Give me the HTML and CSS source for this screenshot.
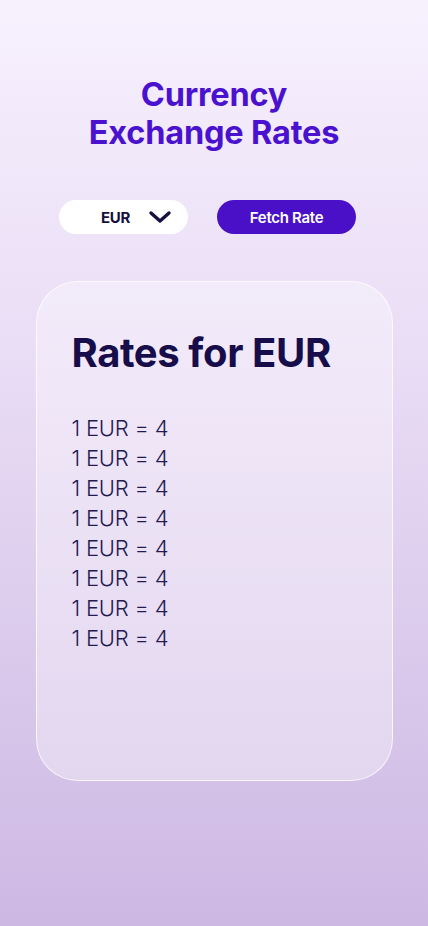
FILE: index.html
```html
<!DOCTYPE html>
<html>
<head>
<meta charset="utf-8">
<link rel="stylesheet" href="styles.css">
</head>
<body>
<main class="page">
  <h1 class="title">Currency<br>Exchange Rates</h1>
  <div class="controls">
    <div class="select">
      <span class="select-value">EUR</span>
      <svg class="chevron" width="24" height="14" viewBox="0 0 24 14"><path d="M3 3 L12 11 L21 3" fill="none" stroke="#15103f" stroke-width="3.4" stroke-linecap="round" stroke-linejoin="round"/></svg>
    </div>
    <button class="fetch">Fetch Rate</button>
  </div>
  <section class="card">
    <h2 class="card-title">Rates for EUR</h2>
    <ul class="rates">
      <li>1 EUR = 4</li>
      <li>1 EUR = 4</li>
      <li>1 EUR = 4</li>
      <li>1 EUR = 4</li>
      <li>1 EUR = 4</li>
      <li>1 EUR = 4</li>
      <li>1 EUR = 4</li>
      <li>1 EUR = 4</li>
    </ul>
  </section>
</main>
</body>
</html>
```
FILE: styles.css
```css
html, body {
  margin: 0;
  padding: 0;
}
body {
  min-height: 926px;
  background: linear-gradient(180deg, #f7f1fe 0%, #e9dcf5 40%, #cdb8e3 100%);
  font-family: Inter, "Noto Sans", sans-serif;
}
.page {
  display: flex;
  flex-direction: column;
  align-items: center;
  padding-top: 76px;
}
.title {
  margin: 0;
  font-size: 32.5px;
  line-height: 38px;
  font-weight: 700;
  color: #4a12cf;
  text-align: center;
  letter-spacing: -0.2px;
}
.controls {
  display: flex;
  gap: 29px;
  margin-top: 48px;
  padding-right: 13px;
}
.select {
  width: 129px;
  height: 34px;
  box-sizing: border-box;
  border-radius: 17px;
  background: #ffffff;
  display: flex;
  align-items: center;
  padding-left: 42px;
  gap: 18px;
}
.select-value {
  font-size: 15px;
  font-weight: 700;
  color: #15103f;
  letter-spacing: -0.3px;
}
.chevron {
  display: block;
}
.fetch {
  width: 139px;
  height: 34px;
  border: none;
  border-radius: 17px;
  background: #4a10c8;
  color: #ffffff;
  font-family: Inter, "Noto Sans", sans-serif;
  font-size: 15px;
  font-weight: 600;
  letter-spacing: -0.3px;
  padding: 0;
}
.card {
  margin-top: 47px;
  width: 357px;
  height: 500px;
  box-sizing: border-box;
  border-radius: 42px;
  background: rgba(255, 255, 255, 0.35);
  border: 1.5px solid rgba(255, 255, 255, 0.75);
  padding: 48px 35px 0 35px;
}
.card-title {
  margin: 0;
  font-size: 40px;
  line-height: 46px;
  font-weight: 700;
  color: #160d4a;
  letter-spacing: -0.4px;
}
.rates {
  list-style: none;
  margin: 37px 0 0 0;
  padding: 0;
}
.rates li {
  font-size: 22px;
  line-height: 30px;
  font-weight: 300;
  color: #241a52;
  letter-spacing: -0.2px;
}
```
